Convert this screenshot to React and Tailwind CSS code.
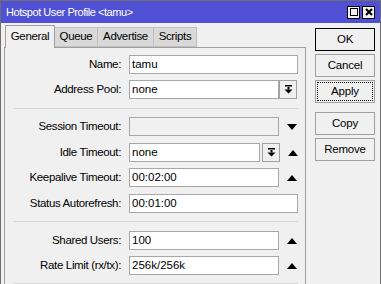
import React from 'react';

const font = { fontFamily: '"Liberation Sans", Arial, sans-serif' };

function DropBtn() {
  return (
    <div className="w-[18px] h-[19px] border border-[#a0a0a0] bg-[#f0f0f0] flex items-center justify-center">
      <svg width="9" height="9" viewBox="0 0 9 9">
        <rect x="1" y="0" width="7" height="1.5" fill="#000" />
        <rect x="3.5" y="2" width="2" height="2.5" fill="#000" />
        <polygon points="0.5,4.5 8.5,4.5 4.5,8.5" fill="#000" />
      </svg>
    </div>
  );
}

function Tri({ up = true }) {
  return (
    <svg width="10" height="6" viewBox="0 0 10 6" className="ml-[8px]">
      {up ? <polygon points="0,6 10,6 5,0" fill="#000" /> : <polygon points="0,0 10,0 5,6" fill="#000" />}
    </svg>
  );
}

function Row({ label, children, mt = 'mt-[6px]' }) {
  return (
    <div className={`flex items-center h-[19px] ${mt}`}>
      <div className="w-[118px] text-right pr-[2px] text-[11.5px] tracking-[-0.35px] text-black leading-none">{label}</div>
      <div className="ml-[6px] flex items-center">{children}</div>
    </div>
  );
}

function Input({ w, value = '', disabled = false }) {
  return (
    <div
      className={`h-[19px] border border-[#a8a8a8] px-[2px] flex items-center text-[11.5px] leading-none ${disabled ? 'bg-[#f0f0f0]' : 'bg-white'}`}
      style={{ width: w }}
    >
      {value}
    </div>
  );
}

function Sep() {
  return <div className="ml-[8px] w-[285px] h-px bg-[#d8d8d8]" />;
}

function SideBtn({ children, className = '' }) {
  return (
    <div className={`w-[60px] h-[23px] flex items-center justify-center text-[11.5px] tracking-[-0.2px] bg-[#f0f0f0] ${className}`}>
      {children}
    </div>
  );
}

export default function App() {
  return (
    <div className="w-[381px] h-[284px] bg-[#f0f0f0] border-l border-t border-r border-[#6e6e6e] overflow-hidden text-black" style={font}>
      <div className="h-[22px] bg-[#5050d4] flex items-center justify-between pl-[5px] pr-[5px]">
        <span className="text-white text-[11px] tracking-[-0.45px]">Hotspot User Profile &lt;tamu&gt;</span>
        <div className="flex gap-[2px]">
          <div className="w-[13px] h-[13px] bg-[#f0f0f0] border border-black flex items-center justify-center">
            <div className="w-[8px] h-[8px] border border-black" />
          </div>
          <div className="w-[13px] h-[13px] bg-[#f0f0f0] border border-black flex items-center justify-center">
            <svg width="8" height="8" viewBox="0 0 8 8">
              <path d="M1 1 L7 7 M7 1 L1 7" stroke="#000" strokeWidth="2" />
            </svg>
          </div>
        </div>
      </div>
      <div className="flex">
        <div className="ml-[3px] w-[302px] mt-[1px]">
          <div className="flex items-end h-[23px] text-[11.5px] tracking-[-0.35px] pl-[1px]">
            <div className="w-[50px] h-[23px] border border-b-0 border-[#a0a0a0] bg-[#f0f0f0] flex items-center justify-center relative z-10 -mb-px">General</div>
            <div className="w-[43px] h-[20px] border border-l-0 border-[#c0c0c0] bg-[#d9d9d9] flex items-center justify-center">Queue</div>
            <div className="w-[56px] h-[20px] border border-l-0 border-[#c0c0c0] bg-[#d9d9d9] flex items-center justify-center">Advertise</div>
            <div className="w-[43px] h-[20px] border border-l-0 border-[#c0c0c0] bg-[#d9d9d9] flex items-center justify-center">Scripts</div>
          </div>
          <div className="border border-[#a0a0a0] h-[260px] pt-[7px]">
            <Row label="Name:" mt="mt-0"><Input w="169px" value="tamu" /></Row>
            <Row label="Address Pool:"><Input w="150px" value="none" /><DropBtn /></Row>
            <div className="mt-[9px]"><Sep /></div>
            <Row label="Session Timeout:" mt="mt-[8px]"><Input w="150px" disabled /><Tri up={false} /></Row>
            <Row label="Idle Timeout:" mt="mt-[7px]"><Input w="131px" value="none" /><div className="ml-[2px]"><DropBtn /></div><Tri /></Row>
            <Row label="Keepalive Timeout:"><Input w="150px" value="00:02:00" /><Tri /></Row>
            <Row label="Status Autorefresh:" mt="mt-[7px]"><Input w="169px" value="00:01:00" /></Row>
            <div className="mt-[8px]"><Sep /></div>
            <Row label="Shared Users:" mt="mt-[9px]"><Input w="150px" value="100" /><Tri /></Row>
            <Row label="Rate Limit (rx/tx):"><Input w="150px" value="256k/256k" /><Tri /></Row>
            <div className="mt-[8px]"><Sep /></div>
          </div>
        </div>
        <div className="ml-[9px] mt-[5px] flex flex-col">
          <SideBtn className="border border-black">OK</SideBtn>
          <SideBtn className="border border-[#a0a0a0] mt-[3px]">Cancel</SideBtn>
          <SideBtn className="border border-[#a0a0a0] mt-[3px] outline outline-1 outline-dotted outline-black -outline-offset-[3px]">Apply</SideBtn>
          <SideBtn className="border border-[#a0a0a0] mt-[9px]">Copy</SideBtn>
          <SideBtn className="border border-[#a0a0a0] mt-[3px]">Remove</SideBtn>
        </div>
      </div>
    </div>
  );
}
